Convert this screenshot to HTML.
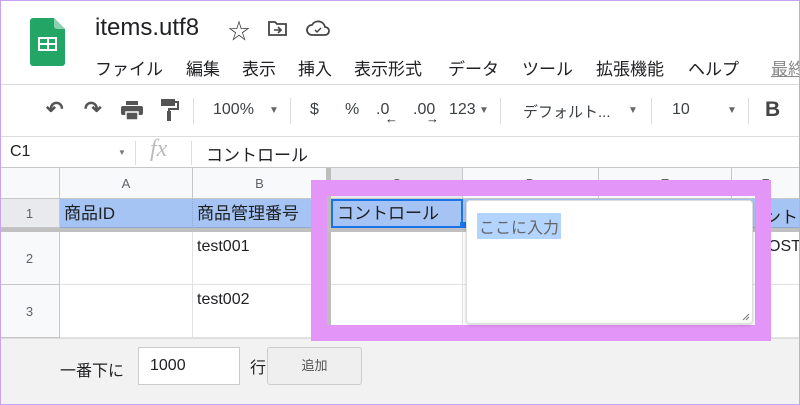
<!DOCTYPE html>
<html><head><meta charset="utf-8"><style>
*{box-sizing:border-box;margin:0;padding:0}
body{width:800px;height:405px;overflow:hidden;background:#fff;font-family:"Liberation Sans","Noto Sans CJK JP",sans-serif;position:relative;color:#202124}
.a{position:absolute}
.frame{position:absolute;left:0;top:0;width:800px;height:405px;border:1px solid #c9a3f3;z-index:50;pointer-events:none}
.m{position:absolute;top:55px;font-size:17px;white-space:nowrap;color:#202124}
.tb{font-size:16px;color:#3c4043}
.hl{position:absolute;background:#c7c7c7}
.colh{position:absolute;top:168px;height:31px;background:#f8f9fa;border-right:1px solid #c7c7c7;border-bottom:1px solid #c7c7c7;font-size:13px;color:#5f6368;text-align:center;line-height:31px}
.rowh{position:absolute;left:0;width:60px;background:#f8f9fa;border-right:1px solid #c7c7c7;border-bottom:1px solid #c7c7c7;font-size:13px;color:#5f6368;text-align:center}
.cell{position:absolute;border-right:1px solid #e2e2e2;border-bottom:1px solid #e2e2e2;font-size:16px;padding-left:4px;background:#fff}
.r1{top:199px;height:29px;background:#a6c4f3;line-height:29px;border-right:1px dotted #8fa8d0;border-bottom:1px solid #8fa8d0}
</style></head><body>
<div class="frame"></div>
<svg class="a" style="left:30px;top:18px" width="35" height="48" viewBox="0 0 35 48"><path d="M3 0H24L35 11V45a3 3 0 0 1-3 3H3a3 3 0 0 1-3-3V3a3 3 0 0 1 3-3z" fill="#23a566"/><path d="M24 0L35 11H27a3 3 0 0 1-3-3z" fill="#8ed1b1"/><rect x="8" y="19" width="19" height="14" fill="#fff"/><rect x="10" y="21" width="7" height="4" fill="#23a566"/><rect x="19" y="21" width="6" height="4" fill="#23a566"/><rect x="10" y="27" width="7" height="4" fill="#23a566"/><rect x="19" y="27" width="6" height="4" fill="#23a566"/></svg>
<div class="a" style="left:95px;top:14px;font-size:24px;color:#202124">items.utf8</div>
<div class="a" style="left:228px;top:14px;font-size:22px;color:#444">☆</div>
<svg class="a" style="left:268px;top:20px" width="20" height="17" viewBox="0 0 20 17"><path d="M1 2h6l2 2h9v11H1z" fill="none" stroke="#444" stroke-width="1.8"/><path d="M6 10h7M10 7l3 3-3 3" fill="none" stroke="#444" stroke-width="1.6"/></svg>
<svg class="a" style="left:306px;top:20px" width="24" height="17" viewBox="0 0 24 17"><path d="M6 15a5 5 0 0 1 0-10 7 7 0 0 1 13 2 4 4 0 0 1 0 8z" fill="none" stroke="#444" stroke-width="1.8"/><path d="M9 10l2 2 4-4" fill="none" stroke="#444" stroke-width="1.5"/></svg>
<div class="m" style="left:95px">ファイル</div>
<div class="m" style="left:186px">編集</div>
<div class="m" style="left:242px">表示</div>
<div class="m" style="left:298px">挿入</div>
<div class="m" style="left:354px">表示形式</div>
<div class="m" style="left:448px">データ</div>
<div class="m" style="left:522px">ツール</div>
<div class="m" style="left:596px">拡張機能</div>
<div class="m" style="left:688px">ヘルプ</div>
<div class="m" style="left:771px;color:#888;text-decoration:underline">最終</div>
<div class="hl" style="left:0;top:84px;width:800px;height:1px;background:#dadce0"></div>
<div class="a tb" style="left:46px;top:97px;font-size:21px;font-weight:bold;color:#555">↶</div>
<div class="a tb" style="left:84px;top:97px;font-size:21px;font-weight:bold;color:#555">↷</div>
<svg class="a" style="left:121px;top:101px" width="22" height="19" viewBox="0 0 22 19"><rect x="5" y="0" width="12" height="4" fill="#555"/><rect x="0" y="5" width="22" height="9" rx="2" fill="#555"/><rect x="5" y="11" width="12" height="8" fill="#555" stroke="#fff" stroke-width="1.5"/></svg>
<svg class="a" style="left:161px;top:99px" width="18" height="22" viewBox="0 0 18 22"><rect x="0" y="0" width="14" height="7" fill="#555"/><path d="M14 3h3v7H8v3" fill="none" stroke="#555" stroke-width="2"/><rect x="6" y="12" width="4" height="10" fill="#555"/></svg>
<div class="hl" style="left:193px;top:98px;width:1px;height:26px;background:#dadce0"></div>
<div class="a tb" style="left:213px;top:101px">100%</div>
<div class="a" style="left:269px;top:105px;font-size:10px;color:#666">▼</div>
<div class="hl" style="left:290px;top:98px;width:1px;height:26px;background:#dadce0"></div>
<div class="a tb" style="left:310px;top:101px">$</div>
<div class="a tb" style="left:345px;top:101px">%</div>
<div class="a tb" style="left:376px;top:101px">.0</div>
<div class="a" style="left:385px;top:111px;font-size:13px">←</div>
<div class="a tb" style="left:413px;top:101px">.00</div>
<div class="a" style="left:426px;top:111px;font-size:13px">→</div>
<div class="a tb" style="left:449px;top:101px">123</div>
<div class="a" style="left:479px;top:105px;font-size:10px;color:#666">▼</div>
<div class="hl" style="left:500px;top:98px;width:1px;height:26px;background:#dadce0"></div>
<div class="a tb" style="left:523px;top:101px;font-size:15px">デフォルト...</div>
<div class="a" style="left:628px;top:105px;font-size:10px;color:#666">▼</div>
<div class="hl" style="left:651px;top:98px;width:1px;height:26px;background:#dadce0"></div>
<div class="a tb" style="left:672px;top:101px">10</div>
<div class="a" style="left:727px;top:105px;font-size:10px;color:#666">▼</div>
<div class="hl" style="left:748px;top:98px;width:1px;height:26px;background:#dadce0"></div>
<div class="a" style="left:765px;top:98px;font-size:21px;font-weight:bold;color:#444">B</div>
<div class="hl" style="left:0;top:136px;width:800px;height:1px;background:#dadce0"></div>
<div class="a" style="left:10px;top:143px;font-size:16px">C1</div>
<div class="a" style="left:118px;top:148px;font-size:8px;color:#777">▼</div>
<div class="hl" style="left:135px;top:141px;width:1px;height:24px;background:#dadce0"></div>
<div class="a" style="left:150px;top:136px;font-size:24px;font-style:italic;color:#bbb;font-family:'Liberation Serif',serif">fx</div>
<div class="hl" style="left:191px;top:141px;width:1px;height:24px;background:#dadce0"></div>
<div class="a" style="left:206px;top:141px;font-size:17px">コントロール</div>
<div class="hl" style="left:0;top:167px;width:800px;height:1px;background:#c7c7c7"></div>
<div class="colh" style="left:0;width:60px"></div>
<div class="colh" style="left:60px;width:133px">A</div>
<div class="colh" style="left:193px;width:134px">B</div>
<div class="hl" style="left:326px;top:168px;width:5px;height:170px;background:#bdbdbd"></div>
<div class="colh" style="left:331px;width:132px;background:#e8eaed">C</div>
<div class="colh" style="left:463px;width:136px">D</div>
<div class="colh" style="left:599px;width:133px">E</div>
<div class="colh" style="left:732px;width:68px">F</div>
<div class="rowh" style="top:199px;height:29px;line-height:29px;background:#e8eaed">1</div>
<div class="rowh" style="top:232px;height:53px;line-height:53px">2</div>
<div class="rowh" style="top:285px;height:53px;line-height:53px">3</div>
<div class="cell r1" style="left:60px;width:133px;font-size:17px">商品ID</div>
<div class="cell r1" style="left:193px;width:133px;font-size:17px">商品管理番号</div>
<div class="cell r1" style="left:331px;width:132px;border:2px solid #1a73e8;line-height:25px;font-size:17px">コントロール</div>
<div class="cell r1" style="left:463px;width:337px"></div>
<div class="a" style="left:764px;top:203px;font-size:17px">ント</div>
<div class="hl" style="left:0;top:228px;width:800px;height:4px;background:#c0c0c0"></div>
<div class="cell" style="left:60px;top:232px;width:133px;height:53px"></div>
<div class="cell" style="left:193px;top:232px;width:134px;height:53px;padding-top:6px">test001</div>
<div class="cell" style="left:331px;top:232px;width:132px;height:53px"></div>
<div class="cell" style="left:463px;top:232px;width:269px;height:53px"></div>
<div class="cell" style="left:732px;top:232px;width:68px;height:53px;padding-top:6px;padding-left:36px">OST</div>
<div class="cell" style="left:60px;top:285px;width:133px;height:53px"></div>
<div class="cell" style="left:193px;top:285px;width:134px;height:53px;padding-top:6px">test002</div>
<div class="cell" style="left:331px;top:285px;width:132px;height:53px"></div>
<div class="cell" style="left:463px;top:285px;width:337px;height:53px"></div>
<div class="a" style="left:0;top:338px;width:800px;height:67px;background:#f2f2f2;border-top:1px solid #ddd"></div>
<div class="a" style="left:60px;top:357px;font-size:16px">一番下に</div>
<div class="a" style="left:138px;top:347px;width:102px;height:38px;background:#fff;border:1px solid #ccc;font-size:16px;padding:9px 11px">1000</div>
<div class="a" style="left:250px;top:354px;font-size:16px">行</div>
<div class="a" style="left:267px;top:347px;width:95px;height:38px;background:#efefef;border:1px solid #ccc;border-radius:3px;font-size:13px;color:#555;text-align:center;line-height:36px">追加</div>
<div class="a" style="left:311px;top:180px;width:460px;height:161px;border:16px solid #e395f8;z-index:20"></div>
<div class="a" style="left:460px;top:222px;width:6px;height:6px;background:#1a73e8;z-index:21"></div>
<div class="a" style="left:466px;top:200px;width:287px;height:124px;background:#fff;border:1px solid #ddd;border-radius:4px;box-shadow:0 1px 3px rgba(0,0,0,.2);z-index:21">
<span class="a" style="left:10px;top:12px;font-size:16px;color:#666;background:#b3d4fc;padding:1px 2px">ここに入力</span>
<svg class="a" style="right:2px;bottom:2px" width="8" height="8"><path d="M1 7L7 1M4 7L7 4" stroke="#777"/></svg></div>
</body></html>
